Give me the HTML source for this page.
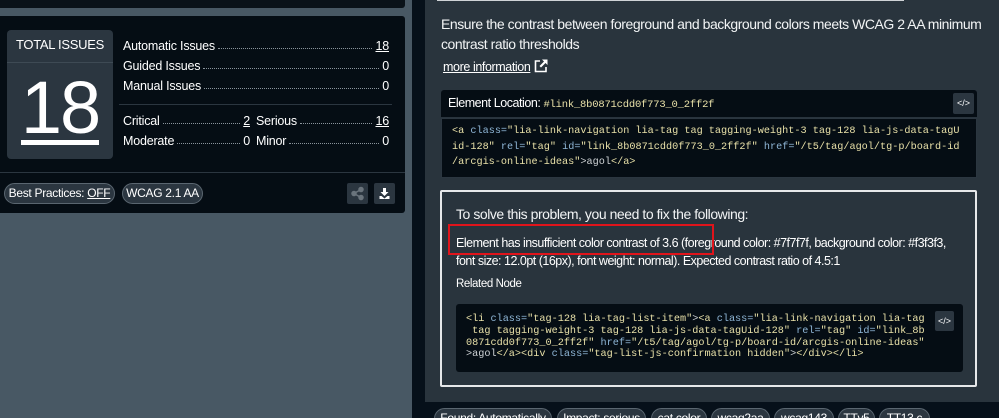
<!DOCTYPE html>
<html><head><meta charset="utf-8"><style>
*{box-sizing:border-box;margin:0;padding:0}
html,body{width:999px;height:418px;overflow:hidden}
body{background:#485864;font-family:"Liberation Sans",sans-serif;color:#fff;position:relative}
.abs{position:absolute}
.mono{font-family:"Liberation Mono",monospace}
.row{position:absolute;font-size:12.5px;display:flex;white-space:nowrap;letter-spacing:-0.2px}
.dots{flex:1;border-bottom:1px dotted #8a949c;margin:0 3px 4px}
.tag{position:absolute;height:21px;border:1px solid #5a6670;border-radius:11px;background:#2b3640;font-size:12px;line-height:19px;text-align:center;letter-spacing:-0.3px;white-space:nowrap;overflow:hidden}
code{font-family:"Liberation Mono",monospace}
.s{color:#e8e0a8}.k{color:#8fb6d6}.t{color:#e8e0a8}
</style></head><body>
<div class="abs" style="left:0;top:0;width:405px;height:8px;background:#0a1219;border-bottom-right-radius:3px"></div>
<div class="abs" style="left:0;top:16px;width:405px;height:197px;background:#050d14;border-radius:0 3px 3px 0"></div>
<div class="abs" style="left:7px;top:30px;width:106px;height:129px;background:#2b3640;border-radius:4px">
<div style="height:33px;border-bottom:1px solid #3e4a54;text-align:center;font-size:13px;line-height:30px;letter-spacing:-0.3px">TOTAL ISSUES</div>
<div style="position:absolute;left:0;right:0;top:48px;text-align:center;font-size:74px;line-height:60px;letter-spacing:-2px">18</div>
<div style="position:absolute;left:14px;width:78px;top:110px;height:5px;background:#fff"></div>
</div>
<div class="row" style="left:123px;top:39px;width:266px"><span>Automatic Issues</span><span class="dots"></span><span style="text-decoration:underline">18</span></div>
<div class="row" style="left:123px;top:59px;width:266px"><span>Guided Issues</span><span class="dots"></span><span>0</span></div>
<div class="row" style="left:123px;top:79px;width:266px"><span>Manual Issues</span><span class="dots"></span><span>0</span></div>
<div class="abs" style="left:119px;top:104px;width:273px;height:1px;background:#2b3640"></div>
<div class="row" style="left:123px;top:114px;width:127px"><span>Critical</span><span class="dots"></span><span style="text-decoration:underline">2</span></div>
<div class="row" style="left:256px;top:114px;width:133px"><span>Serious</span><span class="dots"></span><span style="text-decoration:underline">16</span></div>
<div class="row" style="left:123px;top:134px;width:127px"><span>Moderate</span><span class="dots"></span><span>0</span></div>
<div class="row" style="left:256px;top:134px;width:133px"><span>Minor</span><span class="dots"></span><span>0</span></div>
<div class="abs" style="left:0;top:172px;width:405px;height:1px;background:#2b3640"></div>
<div class="tag" style="left:4px;top:183px;width:111px">Best Practices: <u>OFF</u></div>
<div class="tag" style="left:122px;top:183px;width:81px">WCAG 2.1 AA</div>
<div class="abs" style="left:347px;top:183px;width:21px;height:21px;background:#2b3640;border-radius:2px"><svg width="21" height="21" viewBox="0 0 21 21"><g fill="#6a747c" stroke="#6a747c" stroke-width="1.5"><circle cx="14" cy="6.5" r="2"/><circle cx="7" cy="10.5" r="2"/><circle cx="14" cy="14.5" r="2"/><path d="M14 6.5L7 10.5L14 14.5" fill="none"/></g></svg></div>
<div class="abs" style="left:374px;top:183px;width:21px;height:21px;background:#2b3640;border-radius:2px"><svg width="21" height="21" viewBox="0 0 21 21"><path d="M9 5h3v4h2.5l-4 4-4-4H9z M5.5 13h2l3 2.5 3-2.5h2v3h-10z" fill="#fff"/></svg></div>
<div class="abs" style="left:412px;top:0;width:13px;height:418px;background:#06101a"></div>
<div class="abs" style="left:425px;top:0;width:574px;height:402px;background:#29343d"></div>
<div class="abs" style="left:437px;top:0;width:467px;height:1px;background:#cfd3d6"></div>
<div class="abs" style="left:441px;top:14px;font-size:14px;line-height:20px;width:548px;color:#f2f4f5;letter-spacing:-0.45px">Ensure the contrast between foreground and background colors meets WCAG 2 AA minimum contrast ratio thresholds</div>
<div class="abs" style="left:443px;top:58px;font-size:12.5px;letter-spacing:-0.4px"><u>more information</u> <svg width="16" height="16" viewBox="0 0 16 16" style="vertical-align:-3px"><path d="M7 3H2.5v10.5H13V9" fill="none" stroke="#fff" stroke-width="1.6"/><path d="M9 1.5h5.5V7L12.5 5 8 9.5 6.5 8 11 3.5z" fill="#fff"/></svg></div>
<div class="abs" style="left:441px;top:90px;width:536px;height:27px;background:#050d14;border-radius:3px 3px 0 0;font-size:12.5px;line-height:27px;padding-left:7px;letter-spacing:-0.45px">Element Location: <code class="s" style="font-size:10.5px;letter-spacing:-0.2px">#link_8b0871cdd0f773_0_2ff2f</code></div>
<div class="abs" style="left:953px;top:93px;width:21px;height:21px;background:#2b3640;border-radius:2px;font-size:9px;text-align:center;line-height:21px">&lt;/&gt;</div>
<div class="abs mono" style="left:441px;top:118px;width:536px;height:60px;background:#050d14;border:1px solid #2b3640;font-size:10.2px;line-height:15.5px;padding:5px 0 0 10px;color:#cfd3d6;white-space:pre;overflow:hidden"><span class="t">&lt;a</span> <span class="k">class=</span><span class="s">"lia-link-navigation lia-tag tag tagging-weight-3 tag-128 lia-js-data-tagU
id-128"</span> <span class="k">rel=</span><span class="s">"tag"</span> <span class="k">id=</span><span class="s">"link_8b0871cdd0f773_0_2ff2f"</span> <span class="k">href=</span><span class="s">"/t5/tag/agol/tg-p/board-id
/arcgis-online-ideas"</span>&gt;agol<span class="t">&lt;/a&gt;</span></div>
<div class="abs" style="left:440px;top:190px;width:537px;height:197px;border:2px solid #e6e8ea;border-radius:2px"></div>
<div class="abs" style="left:456px;top:206px;font-size:14px;color:#f2f4f5;letter-spacing:-0.45px">To solve this problem, you need to fix the following:</div>
<div class="abs" style="left:456px;top:234px;width:492px;font-size:12.5px;line-height:18px;letter-spacing:-0.5px">Element has insufficient color contrast of 3.6 (foreground color: #7f7f7f, background color: #f3f3f3, font size: 12.0pt (16px), font weight: normal). Expected contrast ratio of 4.5:1</div>
<div class="abs" style="left:448px;top:224px;width:266px;height:31px;border:2px solid #e0141b"></div>
<div class="abs" style="left:456px;top:278px;font-size:11.5px;letter-spacing:-0.4px">Related Node</div>
<div class="abs mono" style="left:456px;top:304px;width:507px;height:68px;background:#050d14;border-radius:3px;font-size:10.2px;line-height:11.8px;padding:10px 0 0 10px;color:#cfd3d6;white-space:pre;overflow:hidden"><span class="t">&lt;li</span> <span class="k">class=</span><span class="s">"tag-128 lia-tag-list-item"</span>&gt;<span class="t">&lt;a</span> <span class="k">class=</span><span class="s">"lia-link-navigation lia-tag
 tag tagging-weight-3 tag-128 lia-js-data-tagUid-128"</span> <span class="k">rel=</span><span class="s">"tag"</span> <span class="k">id=</span><span class="s">"link_8b
0871cdd0f773_0_2ff2f"</span> <span class="k">href=</span><span class="s">"/t5/tag/agol/tg-p/board-id/arcgis-online-ideas"
</span>&gt;agol<span class="t">&lt;/a&gt;&lt;div</span> <span class="k">class=</span><span class="s">"tag-list-js-confirmation hidden"</span>&gt;<span class="t">&lt;/div&gt;&lt;/li&gt;</span></div>
<div class="abs" style="left:935px;top:311px;width:19px;height:20px;background:#2b3640;border-radius:2px;font-size:9px;text-align:center;line-height:20px">&lt;/&gt;</div>
<div class="abs" style="left:425px;top:402px;width:574px;height:16px;background:#06101a"></div>
<div class="tag" style="top:408px;left:434px;width:118px">Found: Automatically</div>
<div class="tag" style="top:408px;left:557px;width:89px">Impact: serious</div>
<div class="tag" style="top:408px;left:651px;width:56px">cat.color</div>
<div class="tag" style="top:408px;left:711px;width:59px">wcag2aa</div>
<div class="tag" style="top:408px;left:774px;width:60px">wcag143</div>
<div class="tag" style="top:408px;left:838px;width:37px">TTv5</div>
<div class="tag" style="top:408px;left:879px;width:51px">TT13.c</div>
</body></html>
